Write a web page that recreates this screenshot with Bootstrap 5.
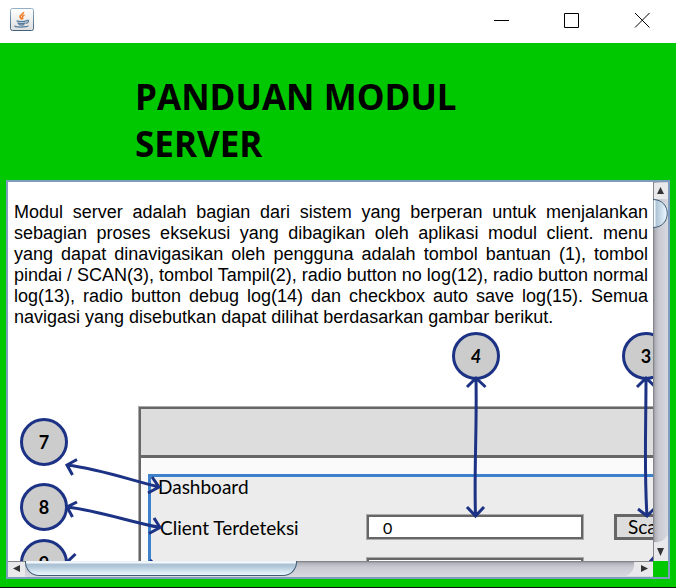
<!DOCTYPE html>
<html lang="id">
<head>
<meta charset="utf-8">
<meta name="viewport" content="width=device-width, initial-scale=1">
<title>Panduan Modul Server</title>
<link rel="stylesheet" href="https://cdn.jsdelivr.net/npm/bootstrap@5.3.0/dist/css/bootstrap.min.css">
<style>
  body { background: #00c800; font-family: "Liberation Sans", Arial, sans-serif; color: #000; }
  .app-window { border-bottom: 1px solid #101010; }
  .title-bar { height: 43px; padding-left: 9px; }
  .win-btn { width: 70px; height: 40px; }
  .guide-head { padding: 30px 135px 13px; }
  .guide-head h1 { font: 700 35px/47px "Open Sans", "Noto Sans", sans-serif; max-width: 360px; }
  .guide-pane { display: grid; grid-template-columns: minmax(0, 1fr) 15px; grid-template-rows: minmax(0, 1fr) 16px;
    margin: 0 6px 8px; border: 2px solid #7d9cbe; min-height: 0; }
  .guide-text { font-size: 18px; line-height: 21px; text-align: justify; padding: 20px 5px 0 6px; }
  .diagram { height: 480px; }
  .diagram > * { position: absolute; }
  .node { width: 48px; height: 48px; border: 3px solid #1c3284; background: #ccc; font: 700 18px/42px Lato, sans-serif; }
  .n4 { left: 444px; top: 4px; font-style: italic; }
  .n3 { left: 614px; top: 4px; }
  .n7 { left: 12px; top: 90px; }
  .n8 { left: 12px; top: 155px; }
  .n9 { left: 12px; top: 211px; }
  .mock-frame { left: 130px; top: 78px; width: 700px; height: 400px; border: 3px solid #666; outline: 1px solid #aaa; outline-offset: -1px; background: #fafafa; }
  .mock-title { height: 49px; background: #ddd; border-bottom: 3px solid #666; }
  .mock-body { left: 140px; top: 146px; width: 680px; height: 320px; border: 3px solid #3d80cc; background: #ececec; }
  .mock-label { font: 400 19px/24px Lato, sans-serif; }
  .l-dash { left: 150px; top: 147px; }
  .l-client { left: 152px; top: 188px; }
  .mock-input { left: 358px; width: 218px; height: 26px; border: 3px solid #666; border-radius: 0; background: #fff; padding: 0 14px; font: 16px/20px Lato, sans-serif; color: #000; outline: 1px solid #aaa; outline-offset: -1px; }
  .i1 { top: 186px; }
  .i2 { top: 229px; }
  .mock-btn { left: 606px; top: 186px; width: 64px; height: 26px; border: 3px solid #666; background: #ddd; padding: 0 0 0 11px; font: 400 19px/20px Lato, sans-serif; text-align: left; }
  .arrows { left: 0; top: 0; pointer-events: none; }
  .v-bar { background: linear-gradient(90deg, #77777d, #b0b0b8 2px, #c8c9d1 6px, #d9dae0); }
  .h-bar { background: linear-gradient(#77777d, #b0b0b8 2px, #c8c9d1 6px, #d9dae0); }
  .bar-btn { border: 0; padding: 0; background: transparent; line-height: 0; }
  .v-thumb { height: 29px; }
  .h-thumb { width: 42.2%; height: 15px; border: 1px solid #3f5d77; border-top: 0; border-radius: 0 0 14px 14px;
    background: linear-gradient(#e8f1f7, #f4f9fc 2px, #a9bfd2 3px, #b4cadb 6px, #d8e9f4 11px, #e9f7ff); }
</style>
<script src="https://cdn.jsdelivr.net/npm/bootstrap@5.3.0/dist/js/bootstrap.bundle.min.js"></script>
</head>
<body>
<div class="app-window vh-100 d-flex flex-column overflow-hidden">
  <header class="title-bar bg-white d-flex align-items-start justify-content-between flex-shrink-0">
    <svg class="mt-2" width="26" height="24" viewBox="0 0 26 24" aria-hidden="true">
      <defs><linearGradient id="ib" x2="0" y2="1"><stop stop-color="#93afc8"/><stop offset="1" stop-color="#3f607e"/></linearGradient>
      <linearGradient id="ig" x2="0" y2="1"><stop stop-color="#fff"/><stop offset="1" stop-color="#dedede"/></linearGradient></defs>
      <rect x="1.5" y=".5" width="23" height="22" rx="2" fill="url(#ig)" stroke="url(#ib)"/>
      <path d="M14.500 4c.5 2-4 3-3.500 5 .3 1.200 1.800 1.500 1.500 2.800M15.500 7c-2 .8-2.800 2-1.500 4" fill="none" stroke="#ee8130" stroke-width="1.700"/>
      <path d="M7.500 12.800c3 .9 7.500.9 10.500-.2M8.500 14.800c2 .8 6 .8 8 0M9.500 16.500c2 .7 4.500.7 6 0M17.500 12.500c2.800-1 2.800 2-.6 2.800M6.500 17.800c-2 .7 1 1.300 5 1.300s8-.6 7.500-1.500" fill="none" stroke="#557b9c" stroke-width="1.300"/>
    </svg>
    <div class="d-flex">
      <button class="win-btn bar-btn" type="button" aria-label="Minimize"><svg width="18" height="16" stroke="#000"><path d="M2 8.500h15"/></svg></button>
      <button class="win-btn bar-btn" type="button" aria-label="Maximize"><svg width="16" height="16" stroke="#000" fill="none"><path d="M1.500 1.500h14v14h-14z"/></svg></button>
      <button class="win-btn bar-btn" type="button" aria-label="Close"><svg width="18" height="16" stroke="#000"><path d="M3 1l14.500 14.500M17.500 1L3 15.500"/></svg></button>
    </div>
  </header>

  <div class="guide-head flex-shrink-0"><h1 class="m-0">PANDUAN MODUL SERVER</h1></div>

  <main class="guide-pane flex-grow-1">
    <div class="bg-white overflow-hidden">
      <p class="guide-text m-0">Modul server adalah bagian dari sistem yang berperan untuk menjalankan sebagian proses eksekusi yang dibagikan oleh aplikasi modul client. menu yang dapat dinavigasikan oleh pengguna adalah tombol bantuan (1), tombol pindai / SCAN(3), tombol Tampil(2), radio button no log(12), radio button normal log(13), radio button debug log(14) dan checkbox auto save log(15). Semua navigasi yang disebutkan dapat dilihat berdasarkan gambar berikut.</p>
      <div class="diagram position-relative overflow-hidden">
        <div class="mock-frame"><div class="mock-title"></div></div>
        <div class="mock-body"></div>
        <span class="mock-label l-dash">Dashboard</span>
        <label class="mock-label l-client" for="clients">Client Terdeteksi</label>
        <input class="mock-input i1" id="clients" type="text" value="0">
        <input class="mock-input i2" type="text" aria-label="Isian kedua">
        <button class="mock-btn" type="button">Scan</button>
        <div class="node rounded-circle text-center n4">4</div>
        <div class="node rounded-circle text-center n3">3</div>
        <div class="node rounded-circle text-center n7">7</div>
        <div class="node rounded-circle text-center n8">8</div>
        <div class="node rounded-circle text-center n9">9</div>
        <svg class="arrows" width="700" height="300" viewBox="8 328 700 300" fill="none" stroke="#1c3284" stroke-width="3" aria-hidden="true">
          <path d="M476 378C477 430 474 470 475.500 516M467 387l9-9 9.500 9M467 507l8.500 9 8.500-9"/>
          <path d="M646 378C646 430 644 470 647 516M637 387l9-9 9.500 9M638 509l9 7 9-9"/>
          <path d="M67 465C100 469 130 480 159 487M77 459.500L67 465l5.500 10M152 477l7 10-11 6"/>
          <path d="M67 507C100 511 130 522 160 527.500M77 502L67 507l5.500 10M154 518l6 9.500-11 6"/>
          <path d="M75.500 554L66 563M150 560l5 5M649 563l7-8"/>
        </svg>
      </div>
    </div>

    <div class="v-bar d-flex flex-column overflow-hidden">
      <button class="bar-btn" type="button" aria-label="Gulir ke atas"><svg width="15" height="17"><path d="M1 1h14v16H1z" fill="#e9e9eb"/><path d="M7.500 5l3.500 7H4z" fill="#333"/></svg></button>
      <svg class="v-thumb flex-shrink-0" width="15" height="29" aria-hidden="true">
        <defs><linearGradient id="vt"><stop stop-color="#eff6fa"/><stop offset=".15" stop-color="#f4f9fc"/><stop offset=".2" stop-color="#acc2d4"/><stop offset=".9" stop-color="#e6f5ff"/></linearGradient></defs>
        <path d="M0 .5C19 .5 19 28.500 0 28.500z" fill="url(#vt)" stroke="#3f5d77"/></svg>
      <button class="bar-btn mt-auto" type="button" aria-label="Gulir ke bawah"><svg width="15" height="27"><path d="M1 8c7 1 12-3 14-8v27H1z" fill="#e9e9eb"/><path d="M4 14h7l-3.500 8z" fill="#333"/></svg></button>
    </div>

    <div class="h-bar d-flex overflow-hidden">
      <button class="bar-btn" type="button" aria-label="Gulir ke kiri"><svg width="17" height="16"><path d="M0 1h17v15H0z" fill="#e9e9eb"/><path d="M5 7.500l7-3.500v7z" fill="#333"/></svg></button>
      <div class="h-thumb"></div>
      <button class="bar-btn ms-auto" type="button" aria-label="Gulir ke kanan"><svg width="27" height="16"><path d="M8 1c1 7-3 12-8 14h27V1z" fill="#e9e9eb"/><path d="M15 4l7 3.500-7 3.500z" fill="#333"/></svg></button>
    </div>
    <div></div>
  </main>
</div>
</body>
</html>
